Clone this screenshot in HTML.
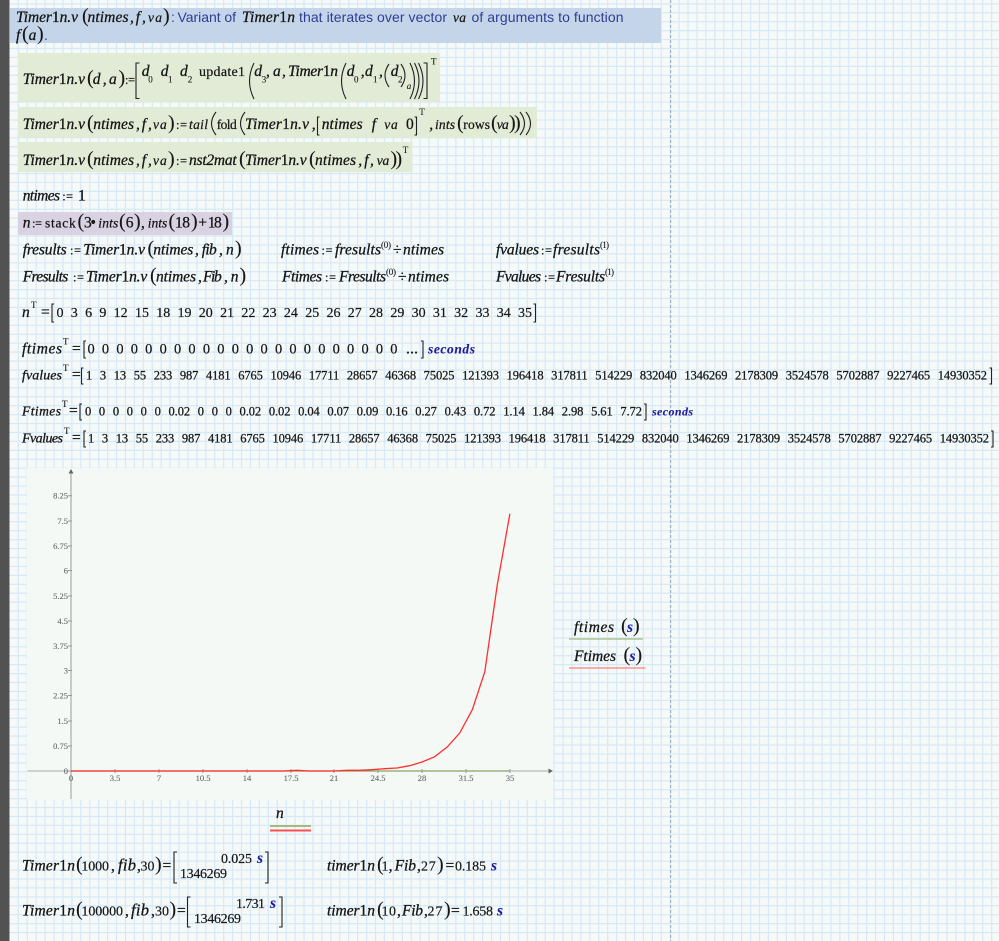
<!DOCTYPE html>
<html><head><meta charset="utf-8"><title>Timer1n</title>
<style>
html,body{margin:0;padding:0;background:#f5f9f7}
svg{display:block;position:absolute;left:0;top:0}
text{font-family:"Liberation Serif",serif;font-size:15.5px;fill:#161616;stroke:#161616;stroke-width:.3px;white-space:pre}
.i{font-style:italic}
.p{font-size:20px;font-style:normal;stroke-width:.1px}
.r{font-style:normal}
.s{font-size:9px;stroke-width:.1px}
.q{font-size:12.5px;stroke-width:.2px}
.t{font-size:13.5px;stroke-width:.25px}
.f{font-size:16.5px}
.u{fill:#1c1c9c;stroke:#1c1c9c;font-weight:bold;font-style:italic;stroke-width:.1px}
.v{font-family:"Liberation Sans",sans-serif;font-size:14px;fill:#2f3c96;stroke:none}
.n{font-size:14px;word-spacing:3.8px;stroke-width:.2px}
.m{font-size:12.5px;word-spacing:4.7px;stroke-width:.25px}
.d{font-size:14px;stroke-width:.2px}
.a{font-size:8.5px;fill:#666;stroke:#666;stroke-width:.1px}
.e{text-anchor:end}
.c{text-anchor:middle}
.l{fill:none;stroke:#222;stroke-width:1.1}
</style></head><body>
<svg width="999" height="941" viewBox="0 0 999 941" xmlns="http://www.w3.org/2000/svg">
<rect width="999" height="941" fill="#f5f9f7"/>
<path fill="none" stroke="#d6e9f7" stroke-width="1.2" d="M18.3 0v941m8.93-941v941m8.93-941v941m8.93-941v941m8.93-941v941m8.93-941v941m8.93-941v941m8.93-941v941m8.93-941v941m8.93-941v941
m8.93-941v941m8.93-941v941m8.93-941v941m8.93-941v941m8.93-941v941m8.93-941v941m8.93-941v941m8.93-941v941m8.93-941v941m8.93-941v941
m8.93-941v941m8.93-941v941m8.93-941v941m8.93-941v941m8.93-941v941m8.93-941v941m8.93-941v941m8.93-941v941m8.93-941v941m8.93-941v941
m8.93-941v941m8.93-941v941m8.93-941v941m8.93-941v941m8.93-941v941m8.93-941v941m8.93-941v941m8.93-941v941m8.93-941v941m8.93-941v941
m8.93-941v941m8.93-941v941m8.93-941v941m8.93-941v941m8.93-941v941m8.93-941v941m8.93-941v941m8.93-941v941m8.93-941v941m8.93-941v941
m8.93-941v941m8.93-941v941m8.93-941v941m8.93-941v941m8.93-941v941m8.93-941v941m8.93-941v941m8.93-941v941m8.93-941v941m8.93-941v941
m8.93-941v941m8.93-941v941m8.93-941v941m8.93-941v941m8.93-941v941m8.93-941v941m8.93-941v941m8.93-941v941m8.93-941v941m8.93-941v941
m8.93-941v941m8.93-941v941m8.93-941v941m8.93-941v941m8.93-941v941m8.93-941v941m8.93-941v941m8.93-941v941m8.93-941v941m8.93-941v941
m8.93-941v941m8.93-941v941m8.93-941v941m8.93-941v941m8.93-941v941m8.93-941v941m8.93-941v941m8.93-941v941m8.93-941v941m8.93-941v941
m8.93-941v941m8.93-941v941m8.93-941v941m8.93-941v941m8.93-941v941m8.93-941v941m8.93-941v941m8.93-941v941m8.93-941v941m8.93-941v941
m8.93-941v941m8.93-941v941m8.93-941v941m8.93-941v941m8.93-941v941m8.93-941v941m8.93-941v941m8.93-941v941m8.93-941v941m8.93-941v941"/>
<path fill="none" stroke="#d6e9f7" stroke-width="1.2" d="M0 3.84h999m-999 8.93h999m-999 8.93h999m-999 8.93h999m-999 8.93h999m-999 8.93h999m-999 8.93h999m-999 8.93h999m-999 8.93h999m-999 8.93h999
m-999 8.93h999m-999 8.93h999m-999 8.93h999m-999 8.93h999m-999 8.93h999m-999 8.93h999m-999 8.93h999m-999 8.93h999m-999 8.93h999m-999 8.93h999
m-999 8.93h999m-999 8.93h999m-999 8.93h999m-999 8.93h999m-999 8.93h999m-999 8.93h999m-999 8.93h999m-999 8.93h999m-999 8.93h999m-999 8.93h999
m-999 8.93h999m-999 8.93h999m-999 8.93h999m-999 8.93h999m-999 8.93h999m-999 8.93h999m-999 8.93h999m-999 8.93h999m-999 8.93h999m-999 8.93h999
m-999 8.93h999m-999 8.93h999m-999 8.93h999m-999 8.93h999m-999 8.93h999m-999 8.93h999m-999 8.93h999m-999 8.93h999m-999 8.93h999m-999 8.93h999
m-999 8.93h999m-999 8.93h999m-999 8.93h999m-999 8.93h999m-999 8.93h999m-999 8.93h999m-999 8.93h999m-999 8.93h999m-999 8.93h999m-999 8.93h999
m-999 8.93h999m-999 8.93h999m-999 8.93h999m-999 8.93h999m-999 8.93h999m-999 8.93h999m-999 8.93h999m-999 8.93h999m-999 8.93h999m-999 8.93h999
m-999 8.93h999m-999 8.93h999m-999 8.93h999m-999 8.93h999m-999 8.93h999m-999 8.93h999m-999 8.93h999m-999 8.93h999m-999 8.93h999m-999 8.93h999
m-999 8.93h999m-999 8.93h999m-999 8.93h999m-999 8.93h999m-999 8.93h999m-999 8.93h999m-999 8.93h999m-999 8.93h999m-999 8.93h999m-999 8.93h999
m-999 8.93h999m-999 8.93h999m-999 8.93h999m-999 8.93h999m-999 8.93h999m-999 8.93h999m-999 8.93h999m-999 8.93h999m-999 8.93h999m-999 8.93h999
m-999 8.93h999m-999 8.93h999m-999 8.93h999m-999 8.93h999m-999 8.93h999"/>
<line x1="670.7" y1="0" x2="670.7" y2="941" stroke="#9aaabb" stroke-width="1" stroke-dasharray="3 2"/>
<rect x="0" y="0" width="9.5" height="941" fill="#525252"/>

<rect x="10" y="8" width="651" height="35" fill="#c5d5e9"/>
<rect x="18" y="53" width="422" height="49" fill="#e2ebd6"/>
<rect x="18" y="107" width="519" height="31" fill="#e2ebd6"/>
<rect x="18" y="142" width="394.500" height="30" fill="#e2ebd6"/>
<rect x="18" y="212" width="214" height="23" fill="#d8d2e2"/>

<!-- Header -->
<text class="i" x="16" y="22" textLength="62">Timer<tspan class="r">1</tspan>n.v</text>
<text class="p" x="82" y="22">(</text>
<text class="i" x="87.500" y="22" textLength="41">ntimes</text>
<text class="i" x="130" y="22">,</text>
<text class="i" x="135.700" y="22">f</text>
<text class="i" x="142" y="22">,</text>
<text class="i t" x="148" y="22" textLength="14">va</text>
<text class="p" x="163" y="22">)</text>
<text class="v" x="171" y="22">:</text>
<text class="v" x="177.500" y="22" textLength="58.500">Variant of</text>
<text class="i" x="242" y="22" textLength="53">Timer<tspan class="r">1</tspan>n</text>
<text class="v" x="299" y="22" textLength="148">that iterates over vector</text>
<text class="i t" x="453" y="22" textLength="13">va</text>
<text class="v" x="471.500" y="22" textLength="152">of arguments to function</text>
<text class="i" x="16" y="40">f</text>
<text class="p" x="22" y="40">(</text>
<text class="i" x="28.600" y="40">a</text>
<text class="p" x="37" y="40">)</text>
<text class="v" x="44" y="40">.</text>

<!-- Row 1 -->
<text class="i" x="22.700" y="84" textLength="62.300">Timer<tspan class="r">1</tspan>n.v</text>
<text class="p" x="87" y="84">(</text>
<text class="i" x="92.700" y="84">d</text>
<text class="i" x="102.700" y="84">,</text>
<text class="i" x="109" y="84">a</text>
<text class="p" x="118.500" y="84">)</text>
<text class="q" x="125" y="84" textLength="10">:=</text>
<path class="l" d="M139.500 63H136V98.500H139.500M423.500 63H427V98.500H423.500"/>
<text class="i" x="141.700" y="76">d</text><text class="s" x="148.300" y="82.500">0</text>
<text class="i" x="160.700" y="76">d</text><text class="s" x="168" y="82.500">1</text>
<text class="i" x="180" y="76">d</text><text class="s" x="187.700" y="82.500">2</text>
<text x="199" y="76" textLength="46" style="font-size:14px;stroke-width:.2px">update1</text>
<path class="l" d="M254 63Q245 81 254 99"/>
<text class="i" x="254.300" y="76">d</text><text class="s" x="261.700" y="82.500">3</text>
<text class="i" x="266" y="76">,</text>
<text class="i" x="273" y="76">a</text>
<text class="i" x="282" y="76">,</text>
<text class="i" x="288" y="76" textLength="50">Timer<tspan class="r">1</tspan>n</text>
<path class="l" d="M346 63Q337 81 346 99"/>
<text class="i" x="346.700" y="76">d</text><text class="s" x="354" y="82.500">0</text>
<text class="i" x="360.700" y="76">,</text>
<text class="i" x="365" y="76">d</text><text class="s" x="373" y="82.500">1</text>
<text class="i" x="379" y="76">,</text>
<path class="l" d="M389 64Q381 75.500 389 87M401 64Q409 75.500 401 87"/>
<text class="i" x="390.700" y="76">d</text><text class="s" x="398" y="82.500">2</text>
<text class="s i" x="406.700" y="89">a</text>
<path class="l" d="M410 63Q419 81 410 99M414.500 63Q423.500 81 414.500 99M418.500 63Q427.500 81 418.500 99"/>
<text class="s" x="431" y="64.500">T</text>

<!-- Row 2 -->
<text class="i" x="22.700" y="129" textLength="62.300">Timer<tspan class="r">1</tspan>n.v</text>
<text class="p" x="87" y="129">(</text>
<text class="i" x="93.300" y="129" textLength="40.700">ntimes</text>
<text class="i" x="136" y="129">,</text>
<text class="i" x="141.700" y="129">f</text>
<text class="i" x="148" y="129">,</text>
<text class="i t" x="153" y="129" textLength="13.700">va</text>
<text class="p" x="168" y="129">)</text>
<text class="q" x="176" y="129" textLength="11">:=</text>
<text class="i t" x="189" y="129" textLength="19">tail</text>
<path class="l" d="M216 112Q207 123.500 216 135"/>
<text class="t" x="216.700" y="129" textLength="20">fold</text>
<path class="l" d="M245 112Q236 123.500 245 135"/>
<text class="i" x="245" y="129" textLength="64">Timer<tspan class="r">1</tspan>n.v</text>
<text class="i" x="311.700" y="129">,</text>
<path class="l" d="M319.500 117H317.500V135H319.500M414.500 117H416.500V135H414.500"/>
<text class="i" x="321.700" y="129" textLength="41">ntimes</text>
<text class="i" x="371.700" y="129">f</text>
<text class="i t" x="384.300" y="129" textLength="13.400">va</text>
<text x="406" y="129">0</text>
<text class="s" x="419.300" y="115">T</text>
<text class="i" x="429.300" y="129">,</text>
<text class="i t" x="435" y="129" textLength="20">ints</text>
<text class="p" x="457" y="129">(</text>
<text class="t" x="463.300" y="129" textLength="26.700">rows</text>
<text class="p" x="491" y="129">(</text>
<text class="i t" x="496.700" y="129" textLength="12">va</text>
<text class="p" x="509" y="129">)</text>
<text class="p" x="514" y="129">)</text>
<path class="l" d="M520 112Q529 123.500 520 135M526 112Q535 123.500 526 135"/>

<!-- Row 3 -->
<text class="i" x="22.700" y="165" textLength="62.300">Timer<tspan class="r">1</tspan>n.v</text>
<text class="p" x="87" y="165">(</text>
<text class="i" x="93.300" y="165" textLength="40.700">ntimes</text>
<text class="i" x="136" y="165">,</text>
<text class="i" x="141.700" y="165">f</text>
<text class="i" x="148" y="165">,</text>
<text class="i t" x="153" y="165" textLength="13.700">va</text>
<text class="p" x="168" y="165">)</text>
<text class="q" x="176" y="165" textLength="11">:=</text>
<text class="i" x="189" y="165" textLength="47.700">nst2mat</text>
<text class="p" x="239" y="165">(</text>
<text class="i" x="245" y="165" textLength="61.700">Timer<tspan class="r">1</tspan>n.v</text>
<text class="p" x="309" y="165">(</text>
<text class="i" x="315" y="165" textLength="41">ntimes</text>
<text class="i" x="358.300" y="165">,</text>
<text class="i" x="364.300" y="165">f</text>
<text class="i" x="370" y="165">,</text>
<text class="i t" x="376.700" y="165" textLength="12.600">va</text>
<text class="p" x="390.500" y="165">)</text>
<text class="p" x="395.500" y="165">)</text>
<text class="s" x="402.700" y="153">T</text>

<!-- Definitions -->
<text class="i" x="22.700" y="200.700" textLength="37.300">ntimes</text>
<text class="q" x="62.300" y="200.700" textLength="10.700">:=</text>
<text x="78" y="200.700">1</text>

<text class="i" x="22.700" y="227.700">n</text>
<text class="q" x="32" y="227.700" textLength="10">:=</text>
<text class="t" x="45" y="227.700" textLength="30.700">stack</text>
<text class="p" x="77.500" y="227.700">(</text>
<text x="84" y="227.700">3</text>
<text x="90.500" y="227.700">•</text>
<text class="i t" x="98.300" y="227.700" textLength="20">ints</text>
<text class="p" x="119" y="227.700">(</text>
<text x="125.700" y="227.700">6</text>
<text class="p" x="134" y="227.700">)</text>
<text x="141" y="227.700">,</text>
<text class="i t" x="147.700" y="227.700" textLength="19.600">ints</text>
<text class="p" x="168.500" y="227.700">(</text>
<text x="175" y="227.700" textLength="15">18</text>
<text class="p" x="191" y="227.700">)</text>
<text x="198.300" y="227.700">+</text>
<text x="207.700" y="227.700" textLength="14">18</text>
<text class="p" x="222.500" y="227.700">)</text>

<text class="i" x="22.700" y="254.500" textLength="44">fresults</text>
<text class="q" x="70" y="254.500" textLength="11">:=</text>
<text class="i" x="83.300" y="254.500" textLength="61.700">Timer<tspan class="r">1</tspan>n.v</text>
<text class="p" x="147.500" y="254.500">(</text>
<text class="i" x="153.300" y="254.500" textLength="40">ntimes</text>
<text class="i" x="195" y="254.500">,</text>
<text class="i" x="201.700" y="254.500" textLength="15">fib</text>
<text class="i" x="219" y="254.500">,</text>
<text class="i" x="226" y="254.500">n</text>
<text class="p" x="235" y="254.500">)</text>

<text class="i" x="281" y="254.500" textLength="38">ftimes</text>
<text class="q" x="321.500" y="254.500" textLength="11">:=</text>
<text class="i" x="335" y="254.500" textLength="46">fresults</text>
<text class="s" x="381" y="248" textLength="10">(0)</text>
<text x="393" y="254.500">÷</text>
<text class="i" x="403" y="254.500" textLength="41">ntimes</text>

<text class="i" x="496" y="254.500" textLength="43">fvalues</text>
<text class="q" x="541" y="254.500" textLength="11">:=</text>
<text class="i" x="553" y="254.500" textLength="47">fresults</text>
<text class="s" x="600" y="248" textLength="9">(1)</text>

<text class="i" x="22.700" y="281.500" textLength="45.600">Fresults</text>
<text class="q" x="73" y="281.500" textLength="11">:=</text>
<text class="i" x="86" y="281.500" textLength="61.300">Timer<tspan class="r">1</tspan>n.v</text>
<text class="p" x="150" y="281.500">(</text>
<text class="i" x="156" y="281.500" textLength="40">ntimes</text>
<text class="i" x="198" y="281.500">,</text>
<text class="i" x="203" y="281.500" textLength="18.700">Fib</text>
<text class="i" x="224" y="281.500">,</text>
<text class="i" x="230.700" y="281.500">n</text>
<text class="p" x="239.500" y="281.500">)</text>

<text class="i" x="282" y="281.500" textLength="40">Ftimes</text>
<text class="q" x="325" y="281.500" textLength="11">:=</text>
<text class="i" x="339" y="281.500" textLength="47">Fresults</text>
<text class="s" x="386" y="275" textLength="10">(0)</text>
<text x="398" y="281.500">÷</text>
<text class="i" x="408" y="281.500" textLength="41">ntimes</text>

<text class="i" x="496" y="281.500" textLength="45">Fvalues</text>
<text class="q" x="544" y="281.500" textLength="11">:=</text>
<text class="i" x="556" y="281.500" textLength="49">Fresults</text>
<text class="s" x="605" y="275" textLength="9">(1)</text>

<!-- n^T -->
<text class="i" x="22" y="317">n</text>
<text class="s" x="31" y="308">T</text>
<text x="41" y="317">=</text>
<path class="l" d="M54 304H52V322H54M533.500 304H535.500V322H533.500"/>
<text class="n" x="56.500" y="317" textLength="475.500">0 3 6 9 12 15 18 19 20 21 22 23 24 25 26 27 28 29 30 31 32 33 34 35</text>

<!-- ftimes^T -->
<text class="i" x="22" y="353.500" textLength="40">ftimes</text>
<text class="s" x="63" y="344.500">T</text>
<text x="72" y="353.500">=</text>
<path class="l" d="M86 341H84V358H86M421 341H423V358H421"/>
<text class="n" x="87.500" y="353.500" textLength="310" style="font-size:14.400px">0 0 0 0 0 0 0 0 0 0 0 0 0 0 0 0 0 0 0 0 0 0</text>
<text x="406" y="353.500" textLength="12">...</text>
<text class="u" x="428" y="353.500" textLength="47" style="font-size:13.500px">seconds</text>

<!-- fvalues^T -->
<text class="i" x="22" y="379.500" textLength="40" style="font-size:14px">fvalues</text>
<text class="s" x="63" y="371">T</text>
<text x="72" y="379.500">=</text>
<path class="l" d="M83.500 368H81.500V384H83.500M989.500 368H991.500V384H989.500"/>
<text class="m" x="86" y="379.500" textLength="901">1 3 13 55 233 987 4181 6765 10946 17711 28657 46368 75025 121393 196418 317811 514229 832040 1346269 2178309 3524578 5702887 9227465 14930352</text>

<!-- Ftimes^T -->
<text class="i" x="22" y="415.500" textLength="39" style="font-size:13.500px">Ftimes</text>
<text class="s" x="62" y="407">T</text>
<text x="69" y="415.500">=</text>
<path class="l" d="M82 404H80V420H82M644 404H646V420H644"/>
<text class="m" x="85" y="415.500" textLength="557">0 0 0 0 0 0 0.02 0 0 0 0.02 0.02 0.04 0.07 0.09 0.16 0.27 0.43 0.72 1.14 1.84 2.98 5.61 7.72</text>
<text class="u" x="652" y="415.500" textLength="41" style="font-size:12px">seconds</text>

<!-- Fvalues^T -->
<text class="i" x="22" y="442.500" textLength="41" style="font-size:14px">Fvalues</text>
<text class="s" x="64" y="434">T</text>
<text x="72" y="442.500">=</text>
<path class="l" d="M86 431H84V447H86M991 431H993V447H991"/>
<text class="m" x="88" y="442.500" textLength="901">1 3 13 55 233 987 4181 6765 10946 17711 28657 46368 75025 121393 196418 317811 514229 832040 1346269 2178309 3524578 5702887 9227465 14930352</text>

<!-- Plot -->
<rect x="27" y="468" width="526" height="331.500" fill="#f5f9f5"/>
<line x1="71" y1="472" x2="71" y2="799" stroke="#b9b9b9" stroke-width="1.5"/>
<path d="M71 469L68.500 473.500H73.500Z" fill="#666"/>
<line x1="27.500" y1="771" x2="549" y2="771" stroke="#aaa" stroke-width="1"/>
<path d="M553 771L548.500 768.500V773.500Z" fill="#666"/>
<path d="M68 495.700H72M68 521H72M68 546H72M68 570.500H72M68 596H72M68 621H72M68 646H72M68 670.500H72M68 695.500H72M68 721H72M68 746H72M68 771H72M115 769V773M159 769V773M203 769V773M247 769V773M291 769V773M334 769V773M378 769V773M422 769V773M466 769V773M510 769V773" stroke="#999" stroke-width="1" fill="none"/>
<text class="a e" x="68" y="498.500">8.25</text>
<text class="a e" x="68" y="523.800">7.5</text>
<text class="a e" x="68" y="548.800">6.75</text>
<text class="a e" x="68" y="573.300">6</text>
<text class="a e" x="68" y="598.800">5.25</text>
<text class="a e" x="68" y="623.800">4.5</text>
<text class="a e" x="68" y="648.800">3.75</text>
<text class="a e" x="68" y="673.300">3</text>
<text class="a e" x="68" y="698.300">2.25</text>
<text class="a e" x="68" y="723.800">1.5</text>
<text class="a e" x="68" y="748.800">0.75</text>
<text class="a e" x="68" y="773.800">0</text>
<text class="a c" x="71" y="781">0</text>
<text class="a c" x="115" y="781">3.5</text>
<text class="a c" x="159" y="781">7</text>
<text class="a c" x="203" y="781">10.5</text>
<text class="a c" x="247" y="781">14</text>
<text class="a c" x="291" y="781">17.5</text>
<text class="a c" x="334" y="781">21</text>
<text class="a c" x="378" y="781">24.5</text>
<text class="a c" x="422" y="781">28</text>
<text class="a c" x="466" y="781">31.5</text>
<text class="a c" x="510" y="781">35</text>
<line x1="71" y1="771" x2="510" y2="771" stroke="#88a468" stroke-width="1.200"/>
<polyline fill="none" stroke="#ff2f2f" stroke-width="1.300" points="71,771 284.200,771 296.700,770.300 309.300,771 321.800,771 334.300,771 346.900,770.300 359.400,770.300 371.900,769.700 384.500,768.700 397,768 409.600,765.700 422.100,762 434.700,756.700 447.200,747 459.700,733 472.300,709.700 484.800,671.700 497.400,584 509.900,513.700"/>

<!-- Legend -->
<text class="i" x="574" y="632" textLength="40">ftimes</text>
<text class="p" x="621" y="632">(</text>
<text class="u" x="627" y="632">s</text>
<text class="p" x="633" y="632">)</text>
<line x1="569" y1="639" x2="643" y2="639" stroke="#a3bb7f" stroke-width="1.200"/>
<text class="i" x="574" y="661" textLength="42">Ftimes</text>
<text class="p" x="623.500" y="661">(</text>
<text class="u" x="629.500" y="661">s</text>
<text class="p" x="635.500" y="661">)</text>
<line x1="569" y1="668" x2="645.500" y2="668" stroke="#ff8080" stroke-width="1.200"/>

<text class="i" x="276" y="818">n</text>
<line x1="270" y1="826" x2="311" y2="826" stroke="#a3bb7f" stroke-width="2"/>
<line x1="270" y1="830.500" x2="311" y2="830.500" stroke="#ff5050" stroke-width="2"/>

<!-- Bottom -->
<text class="i" x="22" y="870.500" textLength="53">Timer<tspan class="r">1</tspan>n</text>
<text class="p" x="76" y="870.500">(</text>
<text class="d" x="81.400" y="870.500" textLength="27.600">1000</text>
<text x="111" y="870.500">,</text>
<text class="i f" x="118" y="870.500" textLength="18">fib</text>
<text x="137" y="870.500">,</text>
<text class="d" x="140.500" y="870.500">30</text>
<text class="p" x="155" y="870.500">)</text>
<text x="162.500" y="870.500">=</text>
<path class="l" d="M177 852H174V883H177M265 852H268V883H265"/>
<text class="d" x="221" y="863" textLength="31">0.025</text>
<text class="u" x="257" y="863">s</text>
<text class="d" x="180" y="878" textLength="47">1346269</text>

<text class="i" x="327" y="870.500" textLength="48">timer<tspan class="r">1</tspan>n</text>
<text class="p" x="377" y="870.500">(</text>
<text class="d" x="381.500" y="870.500">1</text>
<text x="388.600" y="870.500">,</text>
<text class="i" x="394.600" y="870.500" textLength="21.400">Fib</text>
<text x="417" y="870.500">,</text>
<text class="d" x="421" y="870.500" textLength="14.700">27</text>
<text class="p" x="437" y="870.500">)</text>
<text x="445.500" y="870.500">=</text>
<text class="d" x="455" y="870.500" textLength="31">0.185</text>
<text class="u" x="491" y="870.500">s</text>

<text class="i" x="22" y="915.500" textLength="53">Timer<tspan class="r">1</tspan>n</text>
<text class="p" x="76" y="915.500">(</text>
<text class="d" x="81.400" y="915.500" textLength="41.600">100000</text>
<text x="125" y="915.500">,</text>
<text class="i f" x="131" y="915.500" textLength="18">fib</text>
<text x="151" y="915.500">,</text>
<text class="d" x="155" y="915.500">30</text>
<text class="p" x="169.500" y="915.500">)</text>
<text x="177" y="915.500">=</text>
<path class="l" d="M190.500 897H187.500V927H190.500M279 897H282V927H279"/>
<text class="d" x="236" y="908" textLength="29">1.731</text>
<text class="u" x="270" y="908">s</text>
<text class="d" x="194" y="923" textLength="47">1346269</text>

<text class="i" x="327" y="915.500" textLength="48">timer<tspan class="r">1</tspan>n</text>
<text class="p" x="377" y="915.500">(</text>
<text class="d" x="381.500" y="915.500" textLength="14.500">10</text>
<text x="397" y="915.500">,</text>
<text class="i" x="402" y="915.500" textLength="21">Fib</text>
<text x="424" y="915.500">,</text>
<text class="d" x="427.500" y="915.500" textLength="15">27</text>
<text class="p" x="444" y="915.500">)</text>
<text x="451" y="915.500">=</text>
<text class="d" x="462.500" y="915.500" textLength="30.500">1.658</text>
<text class="u" x="497" y="915.500">s</text>
</svg>
</body></html>
